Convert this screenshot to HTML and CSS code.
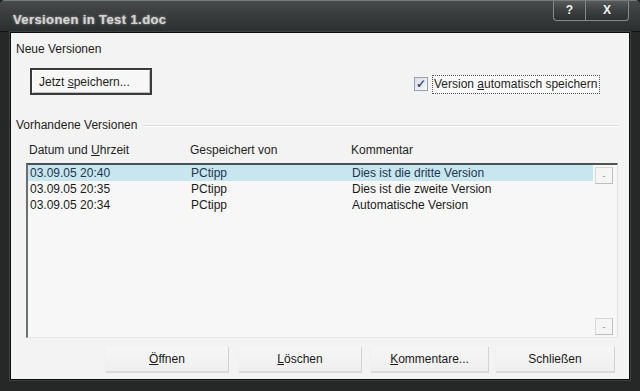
FILE: index.html
```html
<!DOCTYPE html>
<html lang="de">
<head>
<meta charset="utf-8">
<title>Versionen in Test 1.doc</title>
<link rel="stylesheet" href="styles.css">
</head>
<body>
<div class="window">
  <div class="titlebar">
    <div class="title">Versionen in Test 1.doc</div>
    <div class="tbuttons">
      <div class="tbtn help">?</div>
      <div class="tbtn close">X</div>
    </div>
  </div>
  <div class="frame">
    <div class="client">
      <div class="group-label">Neue Versionen</div>
      <div class="new-row">
        <div class="btn default"><span>Jetzt <u>s</u>peichern...</span></div>
        <div class="check">
          <span class="box">✓</span>
          <span class="check-label">Version <u>a</u>utomatisch speichern</span>
        </div>
      </div>
      <div class="group-head">
        <span>Vorhandene Versionen</span>
        <span class="rule"></span>
      </div>
      <div class="cols">
        <span class="c1">Datum und <u>U</u>hrzeit</span>
        <span class="c2">Gespeichert von</span>
        <span class="c3">Kommentar</span>
      </div>
      <div class="list">
        <div class="row sel"><span class="c1">03.09.05 20:40</span><span class="c2">PCtipp</span><span class="c3">Dies ist die dritte Version</span></div>
        <div class="row"><span class="c1">03.09.05 20:35</span><span class="c2">PCtipp</span><span class="c3">Dies ist die zweite Version</span></div>
        <div class="row"><span class="c1">03.09.05 20:34</span><span class="c2">PCtipp</span><span class="c3">Automatische Version</span></div>
        <div class="sb up">-</div>
        <div class="sb down">-</div>
      </div>
      <div class="actions">
        <div class="btn flat b1"><span><u>Ö</u>ffnen</span></div>
        <div class="btn flat b2"><span><u>L</u>öschen</span></div>
        <div class="btn flat b3"><span><u>K</u>ommentare...</span></div>
        <div class="btn flat b4"><span>Schließen</span></div>
      </div>
    </div>
  </div>
</div>
</body>
</html>
```
FILE: styles.css
```css
* { box-sizing: border-box; }
html, body { margin: 0; padding: 0; }
body {
  background: #1c1e1e;
  font-family: "Liberation Sans", Arial, sans-serif;
  font-size: 12px;
  color: #1e1e1e;
}
.window {
  width: 640px;
  height: 391px;
  display: flex;
  flex-direction: column;
  background: #262928;
  border-top: 1px solid #7a7c7c;
  border-radius: 5px 5px 0 0;
  overflow: hidden;
}
.titlebar {
  height: 31px;
  display: flex;
  justify-content: space-between;
  align-items: flex-start;
  background: linear-gradient(to bottom, #474a4a 0%, #3a3d3d 45%, #2c2f2f 100%);
  border-bottom: 1px solid #111;
}
.title {
  margin: 11px 0 0 13px;
  font-weight: bold;
  font-size: 13px;
  color: #d4d4d4;
  letter-spacing: 0.4px;
  text-shadow: 0 0 3px #888, 0 0 1px #aaa;
}
.tbuttons {
  display: flex;
  margin-right: 11px;
  margin-top: -1px;
}
.tbtn {
  height: 21px;
  display: flex;
  align-items: center;
  justify-content: center;
  color: #f2f2f2;
  font-weight: bold;
  font-size: 12px;
  background: linear-gradient(to bottom, #5a5d5d 0%, #3e4141 50%, #2e3131 100%);
  border: 1px solid #8a8c8c;
  border-top: none;
  box-shadow: inset 0 0 1px #222;
}
.help { width: 33px; border-radius: 0 0 0 4px; }
.close { width: 43px; border-left: none; border-radius: 0 0 4px 0; }
.frame {
  flex: 1;
  display: flex;
  padding: 0 10px 11px 10px;
  background: #252827;
}
.client {
  flex: 1;
  background: #f3f3f3;
  border: 1px solid #0c0e0e;
  box-shadow: 0 0 0 1px #3d4040;
  display: flex;
  flex-direction: column;
  padding: 0 0 0 4px;
  position: relative;
}
.group-label {
  margin-top: 8px;
  height: 17px;
  line-height: 17px;
  padding-left: 1px;
}
.new-row {
  display: flex;
  align-items: center;
  margin-top: 10px;
  height: 27px;
}
.btn {
  display: flex;
  align-items: center;
  justify-content: center;
  white-space: nowrap;
}
.default {
  margin-left: 15px;
  width: 122px;
  height: 27px;
  border: 2px solid #3a3a3a;
  background: #f7f7f7;
  box-shadow: inset 1px 1px 0 #fff, inset -1px -1px 0 #bdbdbd;
  justify-content: flex-start;
  padding-left: 7px;
}
.check {
  display: flex;
  align-items: center;
  margin-left: 262px;
  margin-top: 5px;
}
.box {
  width: 14px;
  height: 14px;
  border: 1px solid #9a9fb0;
  background: linear-gradient(135deg, #dcdfe8, #f7f7f7);
  color: #3a4f8a;
  font-size: 12px;
  font-weight: bold;
  line-height: 12px;
  display: flex;
  align-items: center;
  justify-content: center;
}
.check-label {
  margin-left: 4px;
  padding: 1px 2px 2px 1px;
  border: 1px dotted #555;
  background: #fbfbfb;
}
.group-head {
  display: flex;
  align-items: center;
  margin-top: 21px;
  height: 17px;
  padding-left: 1px;
}
.rule {
  flex: 1;
  height: 1px;
  margin: 1px 10px 0 6px;
  background: #dadada;
  box-shadow: 0 1px 0 #fff;
}
.cols {
  display: flex;
  margin-top: 8px;
  height: 18px;
  align-items: center;
  padding-left: 14px;
}
.c1 { width: 161px; }
.c2 { width: 161px; }
.c3 { flex: 1; }
.list {
  position: relative;
  margin: 4px 0 0 11px;
  width: 592px;
  height: 175px;
  border-top: 2px solid #4e5454;
  border-left: 2px solid #6a7070;
  border-right: 1px solid #e2e2e2;
  border-bottom: 1px solid #e6e6e6;
  background: #f7f7f7;
}
.row {
  display: flex;
  height: 16px;
  line-height: 16px;
  padding-left: 2px;
  color: #1a1a1a;
}
.row .c1 { width: 161px; }
.row .c2 { width: 161px; }
.row.sel {
  background: #c8e6ef;
  color: #1f3550;
  margin-right: 24px;
}
.sb {
  position: absolute;
  right: 4px;
  width: 18px;
  height: 17px;
  border: 1px solid #d8d8d8;
  border-right-color: #bdbdbd;
  border-bottom-color: #bdbdbd;
  background: #f5f5f5;
  color: #888;
  font-size: 9px;
  display: flex;
  align-items: center;
  justify-content: center;
}
.sb.up { top: 2px; }
.sb.down { bottom: 2px; }
.actions {
  display: flex;
  margin-top: 9px;
  height: 26px;
  padding-left: 91px;
}
.flat {
  height: 26px;
  background: linear-gradient(to bottom, #f6f6f6, #efefef);
  border-right: 1px solid #d2d2d2;
  border-bottom: 2px solid #dadada;
  box-shadow: -1px 0 0 #f0f0f0;
  color: #1a1a1a;
}
.b1 { width: 123px; }
.b2 { width: 123px; margin-left: 10px; }
.b3 { width: 118px; margin-left: 9px; }
.b4 { width: 119px; margin-left: 7px; }
u { text-decoration: underline; text-underline-offset: 1px; }
```
